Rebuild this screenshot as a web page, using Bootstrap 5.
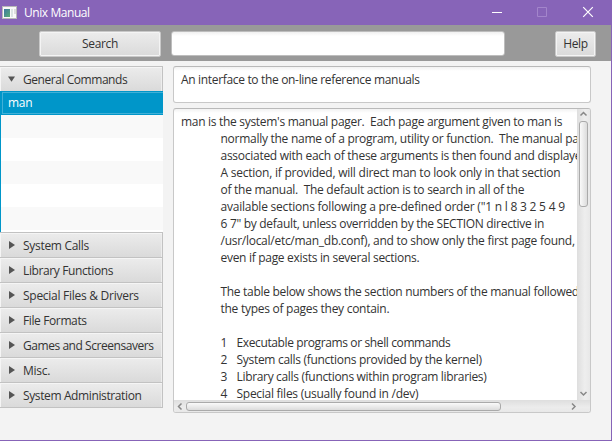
<!DOCTYPE html>
<html lang="en">
<head>
<meta charset="utf-8">
<title>Unix Manual</title>
<link href="https://cdn.jsdelivr.net/npm/bootstrap@5.3.0/dist/css/bootstrap.min.css" rel="stylesheet">
<style>
body{width:612px;height:441px;background:#f3f3f3;font:12px/17px "Open Sans","Noto Sans",sans-serif;letter-spacing:-.27px;color:#333;border-right:1px solid #8764b8;border-bottom:1px solid #8764b8}
.titlebar{height:25px;background:#8764b8;color:#fff;padding-left:2px}
.titlebar svg{flex:none;display:block}
.app-name{margin-left:6px;letter-spacing:-.43px}
.toolbar{height:36px;background:#999;padding:6px 15px 5px 39px}
.fx-btn{height:26px;padding:0;font-size:12px;line-height:24px;letter-spacing:-.35px;color:#333;border:1px solid #c8c8c8;border-radius:2px;background:linear-gradient(#ececec,#dadada);box-shadow:inset 0 0 0 1px #f4f4f4}
.fx-btn-search{width:122px}
.fx-btn-help{width:41px}
.fx-input{width:334px;height:25px;margin-left:10px;padding:0 7px;border:1px solid #bdbdbd;border-radius:3px;background:linear-gradient(#f0f0f0,#fff 4px);box-shadow:none}
.workspace{padding-top:5px}
.sidebar{width:163px;flex:none}
.fx-title{height:25px;padding:0 0 0 8px;border:1px solid #c2c2c2;border-width:1px 1px 0 0;background:linear-gradient(#ececec,#dadada);box-shadow:inset 1px 1px 0 #f5f5f5,inset -1px 0 0 #ededed;white-space:pre}
.fx-title.fx-last{height:26px;border-bottom-width:1px}
.fx-title svg{width:7px;height:8px;margin-right:8px;flex:none}
.fx-list{height:141px;border-left:1px solid #0096c9;background:#fff}
.fx-list .cell{height:23px;background:#fff}
.fx-list .cell:nth-child(even){background:#f9f9f9}
.fx-list .cell.sel{height:24px;background:#0096c9;color:#fff;border:1px solid #0096c9;border-right:0;box-shadow:inset 1px 1px #41b0d7,inset 0 -1px #41b0d7;padding-left:6px;line-height:24px}
.content-area{margin-left:10px;width:418px}
.pane{border:1px solid #c8c8c8;border-top-color:#b9b9b9;border-radius:3px;background:linear-gradient(#f2f2f2,#fff 4px);overflow:hidden}
.summary{height:37px;padding:4px 7px}
.manual{height:305px;margin-top:5px}
.manual-text{width:403px;height:291px;padding:4px 0 0 7px;overflow:hidden;white-space:pre;line-height:17px}
.manual-text div{height:17px}
.in{padding-left:39.5px}
.num{display:inline-block;width:16px}
.wide-1{letter-spacing:-.235px}
.wide-2{letter-spacing:-.22px}
.tight-1{letter-spacing:-.3px}
.tight-2{letter-spacing:-.33px}
.tight-3{letter-spacing:-.38px}
.tight-4{letter-spacing:-.45px}
.vbar{width:13px;height:291px;background:linear-gradient(90deg,#dedede,#eee 60%,#e8e8e8);padding:1px 1px 2px}
.hbar{height:12px;background:linear-gradient(#dedede,#ececec 60%,#e8e8e8);padding:1px 12px 1px 2px}
.vbar svg,.hbar svg{display:block;flex:none}
.vthumb{width:9px;height:86px;margin-top:3px;border:1px solid #aaa;border-radius:3px;background:linear-gradient(90deg,#fafafa,#dcdcdc)}
.hthumb{width:315px;height:9px;margin-left:2px;border:1px solid #aaa;border-radius:3px;background:linear-gradient(#fafafa,#dcdcdc)}
</style>
<script src="https://cdn.jsdelivr.net/npm/bootstrap@5.3.0/dist/js/bootstrap.bundle.min.js"></script>
</head>
<body class="overflow-hidden">
<header class="titlebar d-flex align-items-center">
<svg width="16" height="13"><defs><linearGradient id="g" x2="1" y2="1"><stop stop-color="#3e79a2"/><stop offset="1" stop-color="#5aad76"/></linearGradient></defs><path fill="#b9b9b9" d="M0 0h15v13H0z"/><path fill="#fafafa" d="M1 1h13v11H1z"/><path fill="url(#g)" d="M2 3h6v8H2z"/><path fill="#dce4e4" d="M9 3h2v8H9z"/><path fill="#dedede" d="M12 3h2v5h-2z"/></svg>
<span class="app-name">Unix Manual</span>
<svg class="ms-auto" width="123" height="25" fill="none"><path stroke="#fff" d="M4 12.500h10"/><path stroke="#a385cb" d="M49.500 7.500h9v9h-9z"/><path stroke="#fff" stroke-width="1.200" d="M95.200 7.200l9.600 9.600m0-9.600l-9.600 9.600"/></svg>
</header>
<div class="toolbar d-flex">
<button class="btn fx-btn fx-btn-search">Search</button>
<input class="form-control fx-input" aria-label="Search terms">
<button class="btn fx-btn fx-btn-help ms-auto">Help</button>
</div>
<main class="workspace d-flex">
<nav class="sidebar">
<div class="fx-title tight-4 d-flex align-items-center"><svg viewBox="0 0 8 8"><path fill="#555" d="M0 1h8L4 7z"/></svg>General Commands</div>
<div class="fx-list"><div class="cell sel d-flex align-items-center">man</div><div class="cell"></div><div class="cell"></div><div class="cell"></div><div class="cell"></div><div class="cell"></div></div>
<div class="fx-title tight-1 d-flex align-items-center"><svg><path fill="#555" d="M1 0v8l6-4z"/></svg>System Calls</div>
<div class="fx-title tight-3 d-flex align-items-center"><svg><path fill="#555" d="M1 0v8l6-4z"/></svg>Library Functions</div>
<div class="fx-title d-flex align-items-center"><svg><path fill="#555" d="M1 0v8l6-4z"/></svg>Special Files &amp; Drivers</div>
<div class="fx-title tight-3 d-flex align-items-center"><svg><path fill="#555" d="M1 0v8l6-4z"/></svg>File Formats</div>
<div class="fx-title tight-4 d-flex align-items-center"><svg><path fill="#555" d="M1 0v8l6-4z"/></svg>Games and Screensavers</div>
<div class="fx-title d-flex align-items-center"><svg><path fill="#555" d="M1 0v8l6-4z"/></svg>Misc.</div>
<div class="fx-title fx-last tight-3 d-flex align-items-center"><svg><path fill="#555" d="M1 0v8l6-4z"/></svg>System Administration</div>
</nav>
<section class="content-area">
<div class="pane summary tight-2">An interface to the on-line reference manuals</div>
<div class="pane manual">
<div class="d-flex">
<div class="manual-text"><div class="tight-1">man is the system's manual pager.  Each page argument given to man is</div><div class="in">normally the name of a program, utility or function.  The manual page</div><div class="in">associated with each of these arguments is then found and displayed.</div><div class="in wide-1">A section, if provided, will direct man to look only in that section</div><div class="in">of the manual.  The default action is to search in all of the</div><div class="in wide-2">available sections following a pre-defined order ("1 n l 8 3 2 5 4 9</div><div class="in tight-1">6 7" by default, unless overridden by the SECTION directive in</div><div class="in">/usr/local/etc/man_db.conf), and to show only the first page found,</div><div class="in tight-1">even if page exists in several sections.</div><div></div><div class="in tight-1">The table below shows the section numbers of the manual followed by</div><div class="in">the types of pages they contain.</div><div></div><div class="in tight-3"><span class="num">1</span>Executable programs or shell commands</div><div class="in tight-1"><span class="num">2</span>System calls (functions provided by the kernel)</div><div class="in tight-2"><span class="num">3</span>Library calls (functions within program libraries)</div><div class="in"><span class="num">4</span>Special files (usually found in /dev)</div></div>
<div class="vbar d-flex flex-column align-items-center"><svg width="9" height="8" fill="none" stroke="#888" stroke-width="1.500"><path d="M1.500 5.500l3-3 3 3"/></svg><div class="vthumb"></div><svg class="mt-auto" width="9" height="8" fill="none" stroke="#888" stroke-width="1.500"><path d="M1.500 2l3 3 3-3"/></svg></div>
</div>
<div class="hbar d-flex align-items-center"><svg width="8" height="9" fill="none" stroke="#888" stroke-width="1.500"><path d="M5.500 1.500l-3 3 3 3"/></svg><div class="hthumb"></div><svg class="ms-auto" width="8" height="9" fill="none" stroke="#888" stroke-width="1.500"><path d="M2 1.500l3 3-3 3"/></svg></div>
</div>
</section>
</main>
</body>
</html>
